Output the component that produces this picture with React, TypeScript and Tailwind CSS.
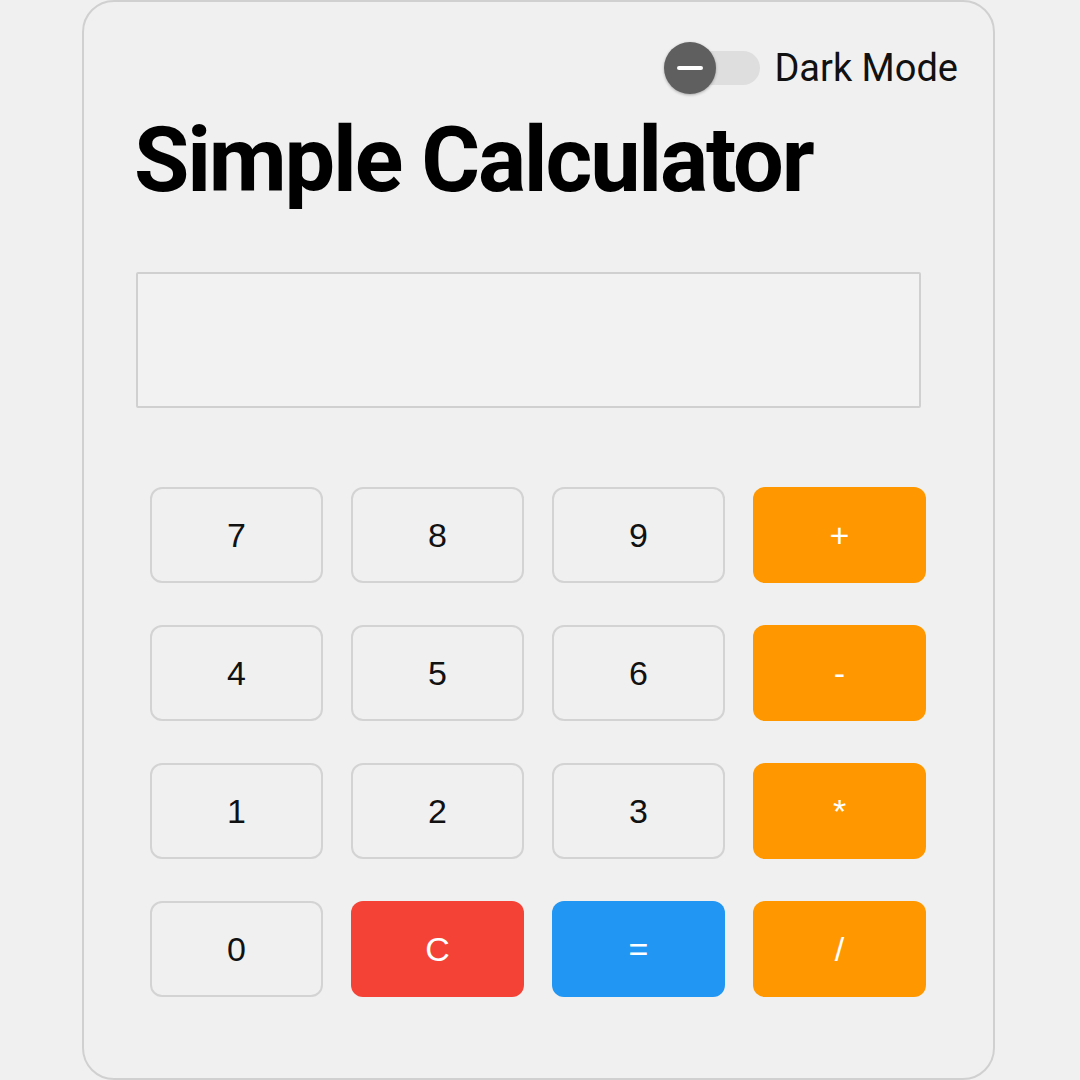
import React, { useState } from "react"

const keys = [
  { label: "7", kind: "num" },
  { label: "8", kind: "num" },
  { label: "9", kind: "num" },
  { label: "+", kind: "op" },
  { label: "4", kind: "num" },
  { label: "5", kind: "num" },
  { label: "6", kind: "num" },
  { label: "-", kind: "op" },
  { label: "1", kind: "num" },
  { label: "2", kind: "num" },
  { label: "3", kind: "num" },
  { label: "*", kind: "op" },
  { label: "0", kind: "num" },
  { label: "C", kind: "clear" },
  { label: "=", kind: "equals" },
  { label: "/", kind: "op" },
]

const keyStyles: Record<string, string> = {
  num: "bg-[#f0f0f0] border-2 border-[#d3d3d3] text-[#111]",
  op: "bg-[#ff9800] text-white",
  clear: "bg-[#f44336] text-white",
  equals: "bg-[#2196f3] text-white",
}

export default function App() {
  const [display, setDisplay] = useState("")

  const press = (label: string) => {
    if (label === "C") return setDisplay("")
    if (label === "=") {
      try {
        // eslint-disable-next-line no-new-func
        setDisplay(String(Function(`return (${display})`)()))
      } catch {
        setDisplay("Error")
      }
      return
    }
    setDisplay(display + label)
  }

  return (
    <div className="min-h-[1080px] bg-[#f0f0f0] flex font-['Roboto',sans-serif]">
      <div className="ml-[82px] w-[913px] h-[1080px] bg-[#f0f0f0] border-2 border-[#d0d0d0] rounded-[32px] px-[52px]">
        <div className="flex justify-end items-center gap-[14px] mt-[40px] -mr-[17px]">
          <div className="relative w-[96px] h-[52px] flex items-center">
            <div className="ml-[26px] w-[70px] h-[34px] rounded-full bg-[#dedede]" />
            <div className="absolute left-0 top-0 w-[52px] h-[52px] rounded-full bg-[#5f5f5f] shadow-[0_1px_3px_rgba(0,0,0,0.3)] flex items-center justify-center">
              <div className="w-[26px] h-[4px] bg-white rounded-full" />
            </div>
          </div>
          <span className="text-[38px] text-[#111] leading-none">Dark Mode</span>
        </div>

        <h1 className="mt-[22px] -ml-[2px] text-[90px] font-bold leading-none tracking-[-2.2px] text-black">
          Simple Calculator
        </h1>

        <div className="mt-[66px] w-[785px] h-[136px] bg-[#f2f2f2] border-2 border-[#d0d0d0] rounded-[2px] flex items-center justify-end px-4 text-[40px] font-['Liberation_Sans',sans-serif]">
          {display}
        </div>

        <div className="mt-[79px] ml-[14px] grid grid-cols-[repeat(4,173px)] gap-x-[28px] gap-y-[42px]">
          {keys.map((k) => (
            <button
              key={k.label}
              onClick={() => press(k.label)}
              className={`h-[96px] rounded-[12px] flex items-center justify-center text-[34px] font-['Liberation_Sans',sans-serif] ${keyStyles[k.kind]}`}
            >
              {k.label}
            </button>
          ))}
        </div>
      </div>
    </div>
  )
}
